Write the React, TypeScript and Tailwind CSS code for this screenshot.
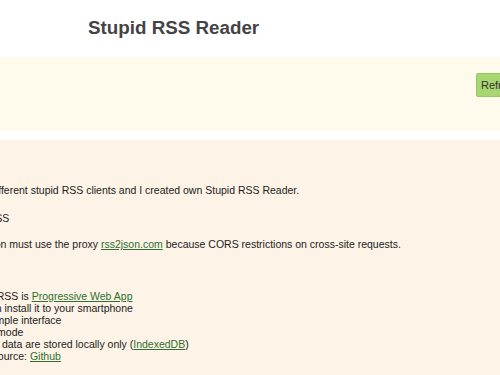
export default function App() {
  const link = "text-[#2f6f2f] underline";
  return (
    <div className="min-h-screen w-[500px] overflow-hidden bg-[#fdf3e6] font-['Liberation_Sans',Arial,sans-serif] text-[#222]">
      <header className="flex h-[57px] items-center bg-white pl-[88px]">
        <h1 className="text-[18.8px] font-bold text-[#444]">Stupid RSS Reader</h1>
      </header>
      <div className="flex h-[74px] bg-[#fefaec] pt-[16px]">
        <button className="ml-[476px] h-[24px] shrink-0 rounded-[2px] border border-[#98c862] bg-[#a8d672] pl-[4px] pr-[6px] text-[11px] text-[#333]">
          Refresh
        </button>
      </div>
      <div className="h-[9px] bg-white" />
      <main className="pt-[44px] text-[10.5px] leading-[12px]">
        <div className="ml-[-45px] w-[700px]">
          <p>
            I hated different stupid RSS clients and I created own Stupid RSS Reader.
          </p>
          <p className="mt-[16px]">Stupid RSS</p>
          <p className="mt-[14px]">
            Application must use the proxy{" "}
            <a href="#" className={link}>rss2json.com</a> because CORS
            restrictions on cross-site requests.
          </p>
          <ul className="mt-[40px] ml-[9px]">
            <li>
              Stupid RSS is <a href="#" className={link}>Progressive Web App</a>
            </li>
            <li>You can install it to your smartphone</li>
            <li>Very simple interface</li>
            <li>Offline mode</li>
            <li>
              All your data are stored locally only (
              <a href="#" className={link}>IndexedDB</a>)
            </li>
            <li>
              Open source: <a href="#" className={link}>Github</a>
            </li>
          </ul>
        </div>
      </main>
    </div>
  );
}
